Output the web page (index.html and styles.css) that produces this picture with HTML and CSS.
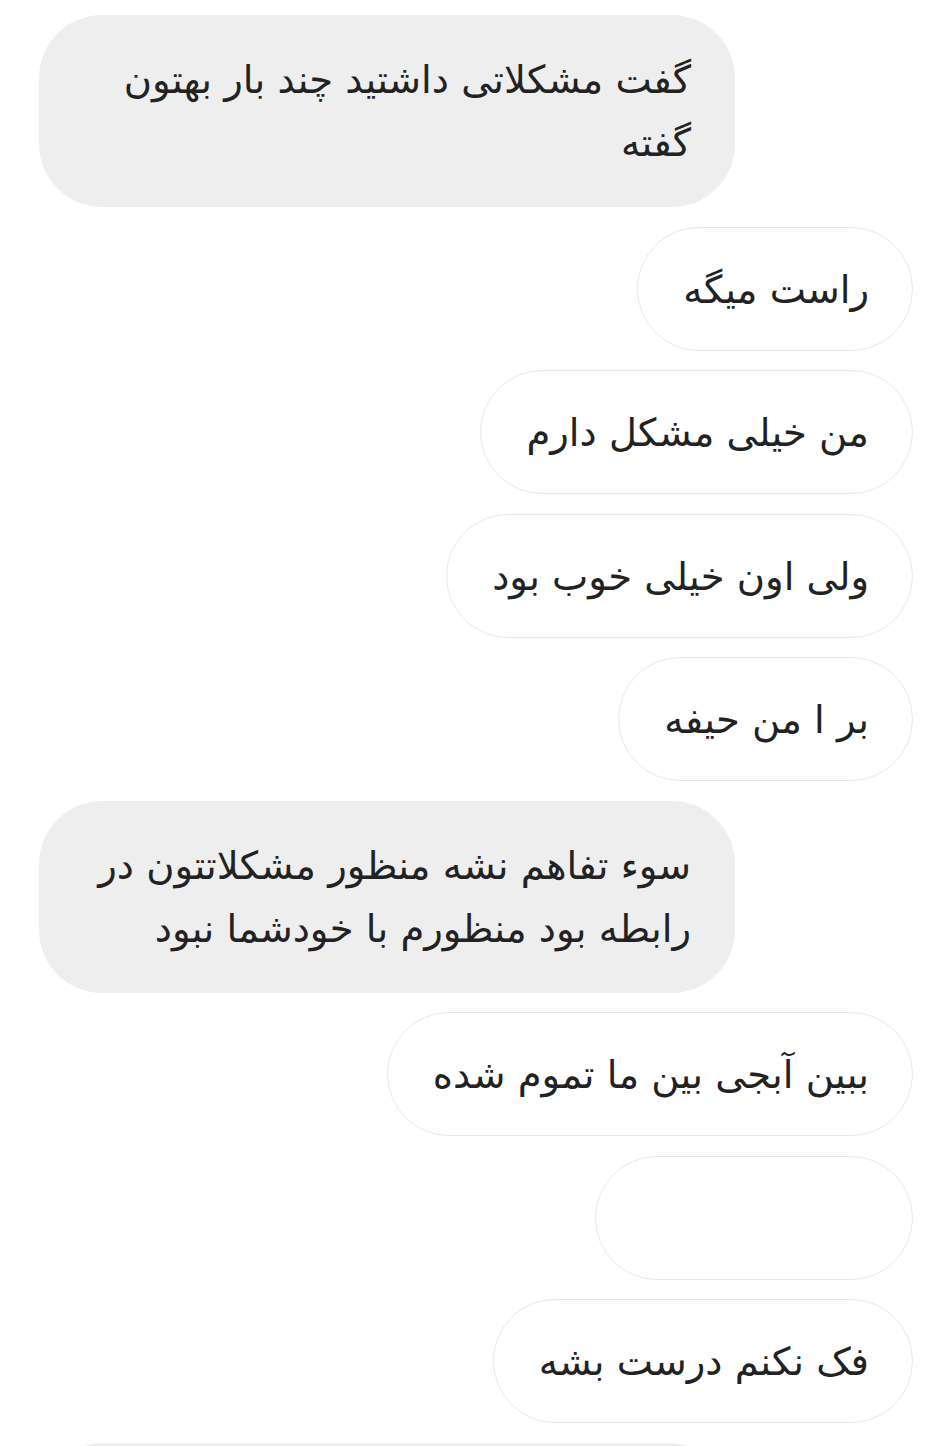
FILE: index.html
```html
<!DOCTYPE html>
<html lang="fa" dir="rtl">
<head>
<meta charset="utf-8">
<title>Chat</title>
<link rel="stylesheet" href="styles.css">
</head>
<body>
<div class="thread">
  <div class="row theirs"><div class="bubble gray">گفت مشکلاتی داشتید چند بار بهتون گفته</div></div>
  <div class="row mine"><div class="bubble outline">راست میگه</div></div>
  <div class="row mine"><div class="bubble outline">من خیلی مشکل دارم</div></div>
  <div class="row mine"><div class="bubble outline">ولی اون خیلی خوب بود</div></div>
  <div class="row mine"><div class="bubble outline">بر ا من حیفه</div></div>
  <div class="row theirs"><div class="bubble gray">سوء تفاهم نشه منظور مشکلاتتون در رابطه بود منظورم با خودشما نبود</div></div>
  <div class="row mine"><div class="bubble outline">ببین آبجی بین ما تموم شده</div></div>
  <div class="row mine"><div class="bubble outline empty">&nbsp;</div></div>
  <div class="row mine"><div class="bubble outline">فک نکنم درست بشه</div></div>
  <div class="row theirs"><div class="bubble gray tail">&nbsp;</div></div>
</div>
</body>
</html>
```
FILE: styles.css
```css
html, body {
  margin: 0;
  padding: 0;
  background: #ffffff;
  height: 1446px;
  overflow: hidden;
}
.thread {
  display: flex;
  flex-direction: column;
  gap: 19.5px;
  padding: 15px 14px 0 39px;
  font-family: "DejaVu Sans", sans-serif;
  font-size: 38.5px;
  line-height: 63px;
  color: #222222;
}
.row {
  display: flex;
}
.row.mine {
  justify-content: flex-start;
}
.row.theirs {
  justify-content: flex-end;
}
.bubble {
  box-sizing: border-box;
  border-radius: 63px;
  padding: 30px 43px 29px 45px;
}
.bubble.gray {
  background: #eeeeee;
  max-width: 696px;
  padding: 33px 44px 33px 45px;
}
.bubble.outline {
  border: 1px solid #e9e9e9;
  background: #ffffff;
}
.bubble.empty {
  width: 318px;
}
.bubble.tail {
  width: 692px;
}
```
